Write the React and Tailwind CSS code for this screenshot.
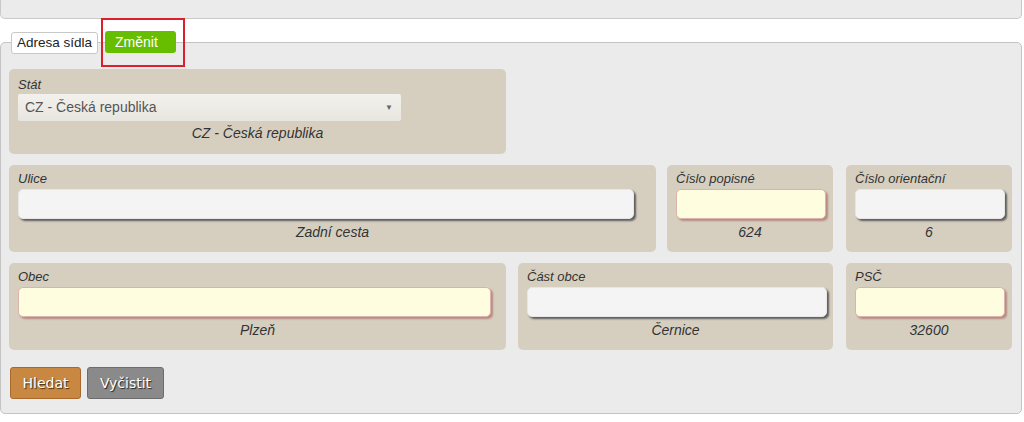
import React from "react";

const font = { fontFamily: '"Liberation Sans", Arial, sans-serif' };

function Field({ label, value, width, inputWidth, yellow }) {
  return (
    <div className={`${width} h-[87px] rounded-[5px] bg-[#d6cfc0] pl-[9px] pt-[6px]`}>
      <div className="text-[13px] leading-[16px] italic text-[#333]">{label}</div>
      <div
        className={`${inputWidth} mt-[2px] h-[30px] rounded-[5px] ${
          yellow
            ? "bg-[#fffddf] border border-[#dcb3ab] shadow-[2px_2px_2px_#b98a82]"
            : "bg-[#f4f4f4] border border-[#e6e6e6] shadow-[2px_2px_2px_#5e5e5e]"
        }`}
      />
      <div className="mt-[5px] pr-[9px] text-center text-[14px] leading-[16px] italic text-[#333]">{value}</div>
    </div>
  );
}

export default function App() {
  return (
    <div className="min-h-screen w-[1024px] bg-white" style={font}>
      <div className="h-[19px] w-[1022px] rounded-b-[5px] border border-t-0 border-[#c9c9c9] bg-[#ebebeb]" />

      <div className="mt-[23px] h-[372px] w-[1022px] rounded-[5px] border border-[#c4c4c4] bg-[#ebebeb] pl-[8px]">
        {/* legend */}
        <div className="relative -mt-[12px] ml-[2px] flex items-start gap-[7px]">
          <div className="mt-[1px] flex h-[22px] w-[87px] items-center justify-center rounded-[3px] border border-[#c8c8c8] bg-white text-[13.5px] text-[#222]">
            Adresa sídla
          </div>
          <div className="flex h-[22px] w-[71px] items-center rounded-[3px] bg-[#67bd00] pl-[10px] text-[14px] text-white">
            Změnit
          </div>
          <div className="pointer-events-none absolute left-[90px] top-[-13px] h-[49px] w-[84px] border-2 border-[#dc1f2b]" />
        </div>

        {/* Stát */}
        <div className="mt-[15px] h-[85px] w-[497px] rounded-[5px] bg-[#d6cfc0] pl-[9px] pt-[8px]">
          <div className="text-[13px] leading-[16px] italic text-[#333]">Stát</div>
          <div className="mt-[1px] flex h-[27px] w-[383px] items-center justify-between rounded-[2px] bg-gradient-to-b from-[#f3f1ed] to-[#e9e6e0] pl-[7px] pr-[8px] text-[14px] text-[#555]">
            <span>CZ - Česká republika</span>
            <span className="text-[8px] text-[#666]">▼</span>
          </div>
          <div className="mt-[4px] pr-[9px] text-center text-[14px] leading-[16px] italic text-[#333]">
            CZ - Česká republika
          </div>
        </div>

        <div className="mt-[11px] flex">
          <Field label="Ulice" value="Zadní cesta" width="w-[647px]" inputWidth="w-[616px]" />
          <div className="ml-[11px]">
            <Field label="Číslo popisné" value="624" width="w-[166px]" inputWidth="w-[150px]" yellow />
          </div>
          <div className="ml-[13px]">
            <Field label="Číslo orientační" value="6" width="w-[166px]" inputWidth="w-[150px]" />
          </div>
        </div>

        <div className="mt-[11px] flex">
          <Field label="Obec" value="Plzeň" width="w-[497px]" inputWidth="w-[473px]" yellow />
          <div className="ml-[12px]">
            <Field label="Část obce" value="Černice" width="w-[315px]" inputWidth="w-[300px]" />
          </div>
          <div className="ml-[13px]">
            <Field label="PSČ" value="32600" width="w-[166px]" inputWidth="w-[150px]" yellow />
          </div>
        </div>

        <div className="mt-[17px] flex gap-[6px] pl-[1px]" style={{ fontFamily: '"DejaVu Sans", Verdana, sans-serif' }}>
          <button className="h-[32px] w-[71px] rounded-[3px] border border-[#a8692b] bg-[#c98842] text-[14px] text-white [text-shadow:1px_1px_1px_#3a2a10]">
            Hledat
          </button>
          <button className="h-[32px] w-[77px] rounded-[3px] border border-[#6c6c6c] bg-[#8a8a8a] text-[14px] text-white [text-shadow:1px_1px_1px_#222]">
            Vyčistit
          </button>
        </div>
      </div>
    </div>
  );
}
